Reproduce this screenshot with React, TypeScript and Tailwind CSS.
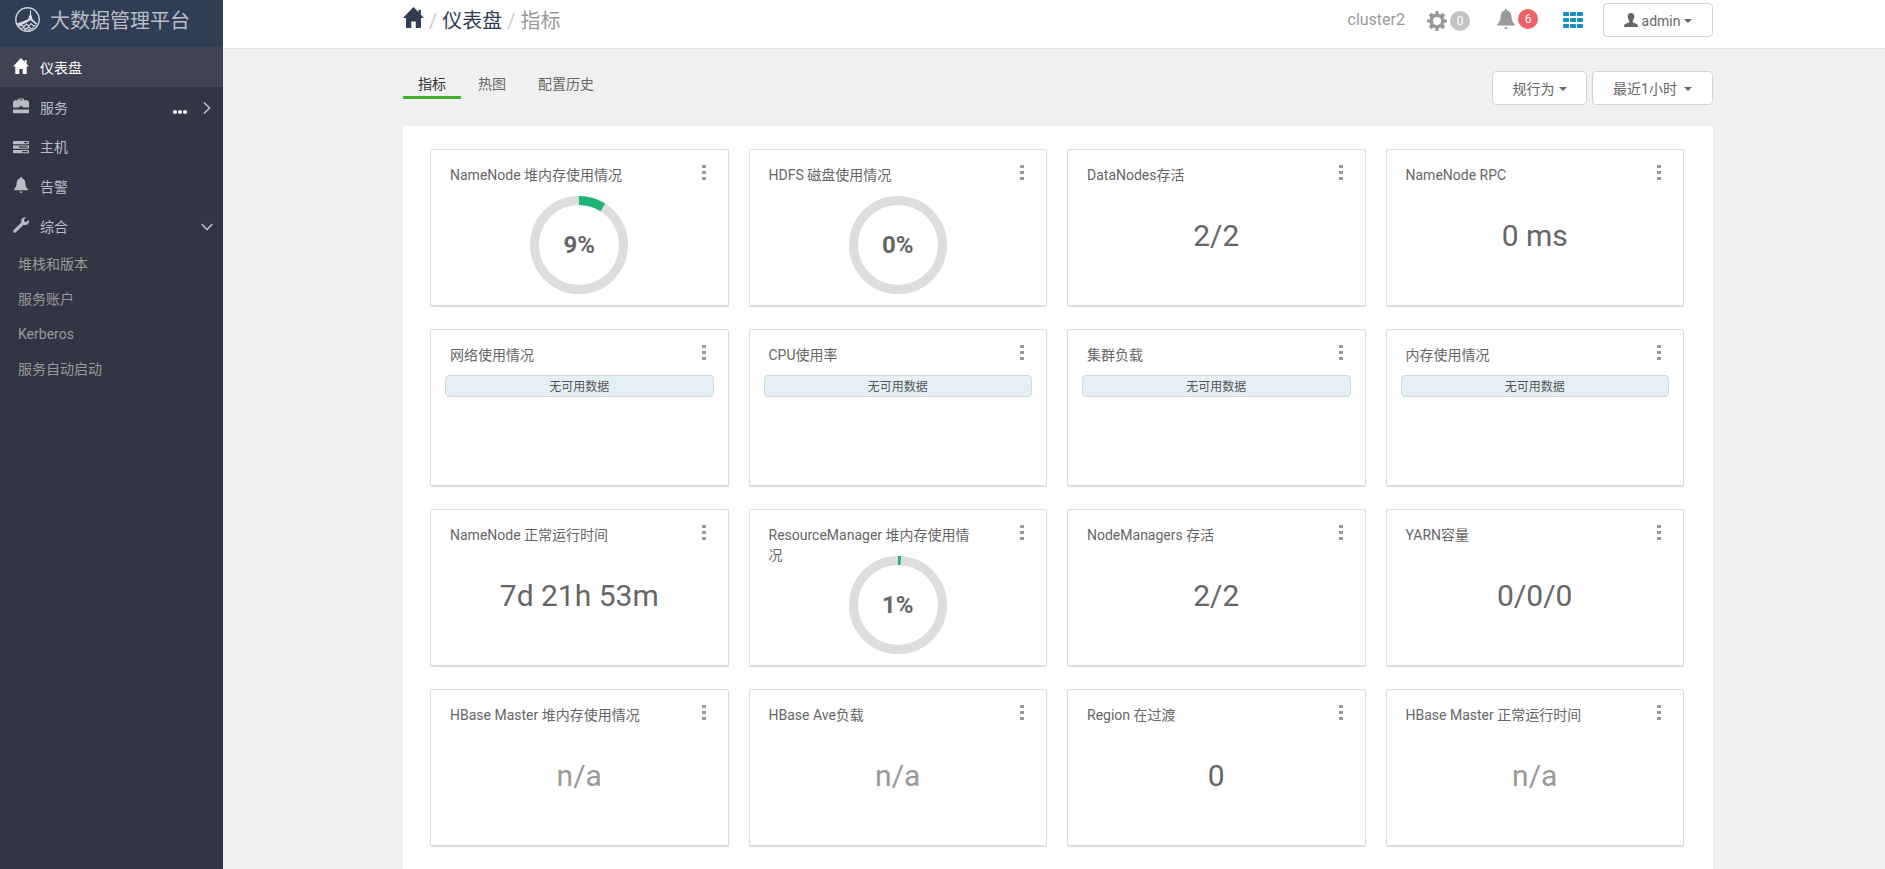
import React from 'react';

type IconProps = { className?: string };

interface Widget {
  title: string;
  kind: 'donut' | 'text' | 'empty';
  value?: string;
  percent?: number;
  muted?: boolean;
}

const WIDGETS: Widget[] = [
  { title: 'NameNode 堆内存使用情况', kind: 'donut', percent: 9 },
  { title: 'HDFS 磁盘使用情况', kind: 'donut', percent: 0 },
  { title: 'DataNodes存活', kind: 'text', value: '2/2' },
  { title: 'NameNode RPC', kind: 'text', value: '0 ms' },
  { title: '网络使用情况', kind: 'empty' },
  { title: 'CPU使用率', kind: 'empty' },
  { title: '集群负载', kind: 'empty' },
  { title: '内存使用情况', kind: 'empty' },
  { title: 'NameNode 正常运行时间', kind: 'text', value: '7d 21h 53m' },
  { title: 'ResourceManager 堆内存使用情况', kind: 'donut', percent: 1 },
  { title: 'NodeManagers 存活', kind: 'text', value: '2/2' },
  { title: 'YARN容量', kind: 'text', value: '0/0/0' },
  { title: 'HBase Master 堆内存使用情况', kind: 'text', value: 'n/a', muted: true },
  { title: 'HBase Ave负载', kind: 'text', value: 'n/a', muted: true },
  { title: 'Region 在过渡', kind: 'text', value: '0' },
  { title: 'HBase Master 正常运行时间', kind: 'text', value: 'n/a', muted: true },
];

const HomeIcon: React.FC<IconProps> = ({ className }) => (
  <svg className={className} viewBox="0 0 16 16" fill="currentColor" aria-hidden="true">
    <path d="M8 0 0 8.400h2.300v7.200q0 .4.4.4h3.200q.4 0 .4-.4V11h3.400v4.600q0 .4.4.4h3.200q.4 0 .4-.4V8.400H16l-2.400-2.500V2h-1.800v2z" />
  </svg>
);

const BriefcaseIcon: React.FC<IconProps> = ({ className }) => (
  <svg className={className} viewBox="0 0 16 16" fill="currentColor" aria-hidden="true">
    <path d="M5 2.200V1.400Q5 .4 6 .4h4q1 0 1 1v.8h3.600L16 4v5.600H9.400V8H6.600v1.600H0V4l1.400-1.800zm1.300 0h3.400v-.7H6.300zM0 11.400h16v3q0 .9-.9.900H.9q-.9 0-.9-.9z" />
  </svg>
);

const TasksIcon: React.FC<IconProps> = ({ className }) => (
  <svg className={className} viewBox="0 0 16 16" fill="currentColor" aria-hidden="true">
    <path fillRule="evenodd" d="M.6 2h14.800l.6.6v2.100l-.6.6H.6L0 4.700V2.600zM11 3.100v1.100h3.700V3.100zM.6 6.500h14.800l.6.600v2.100l-.6.600H.6L0 9.200V7.100zM6 7.600v1.100h8.700V7.600zM.6 11h14.800l.6.600v2.100l-.6.600H.6l-.6-.6v-2.100zM9 12.100v1.100h5.700v-1.100z" />
  </svg>
);

const BellIcon: React.FC<IconProps> = ({ className }) => (
  <svg className={className} viewBox="0 0 16 16" fill="currentColor" aria-hidden="true">
    <path d="M8 0c.6 0 1 .5 1.100 1.200 2.100.6 3 2.200 3.200 4.600.2 3.200.9 5 2.700 6.400v1H1v-1c1.800-1.400 2.500-3.200 2.700-6.400.2-2.400 1.100-4 3.200-4.600C7 .5 7.400 0 8 0zM6.600 14.500h2.800Q9.200 16 8 16t-1.400-1.500z" />
  </svg>
);

const WrenchIcon: React.FC<IconProps> = ({ className }) => (
  <svg className={className} viewBox="0 0 16 16" fill="currentColor" aria-hidden="true">
    <path d="M13.200.3 10.900 2.600l.5 2 2 .5 2.400-2.300c.6 2.300-.2 4.300-2.200 5-1.100.4-2.100.3-3-.1l-7.700 7.600q-1.100 1-2.200 0t0-2.300l7.700-7.500C7.500 2.500 9.500-.3 13.200.3z" />
  </svg>
);

const CogIcon: React.FC<IconProps> = ({ className }) => (
  <svg className={className} viewBox="0 0 20 20" fill="currentColor" aria-hidden="true">
    <path
      fillRule="evenodd"
      d="M8.700 0h2.600l.5 2.700 1.700.7L15.800 1.800l2.400 2.400-1.600 2.300.7 1.700 2.700.5v2.600l-2.700.5-.7 1.700 1.600 2.300-2.400 2.400-2.300-1.600-1.700.7-.5 2.700H8.700l-.5-2.700-1.700-.7-2.300 1.600-2.400-2.400 1.600-2.300-.7-1.700L0 11.300V8.700l2.700-.5.7-1.700L1.800 4.200l2.400-2.400 2.300 1.600 1.700-.7zM10 6a4 4 0 1 0 0 8 4 4 0 0 0 0-8z"
    />
  </svg>
);

const GridIcon: React.FC<IconProps> = ({ className }) => (
  <svg className={className} viewBox="0 0 20 16" fill="currentColor" aria-hidden="true">
    {[0, 6, 12].map(y =>
      [0, 7, 14].map(x => <rect key={`${x}-${y}`} x={x} y={y} width="6" height="4" rx="1" />)
    )}
  </svg>
);

const UserIcon: React.FC<IconProps> = ({ className }) => (
  <svg className={className} viewBox="0 0 14 14" fill="currentColor" aria-hidden="true">
    <path d="M7 0c2.200 0 3.400 1.500 3.300 3.800-.1 1.800-.7 3.200-1.600 4v1.100c.3.900 3.800 1.400 4.700 2.600.4.600.6 1.400.6 2.500H0c0-1.100.2-1.900.6-2.500.9-1.200 4.400-1.700 4.700-2.600V7.800c-.9-.8-1.500-2.200-1.600-4C3.600 1.500 4.800 0 7 0z" />
  </svg>
);

const Chevron: React.FC<IconProps> = ({ className }) => (
  <svg className={className} viewBox="0 0 8 12" fill="none" stroke="currentColor" strokeWidth="1.600" aria-hidden="true">
    <path d="m1 .7 5.600 5.300L1 11.300" />
  </svg>
);

const Caret = () => (
  <span className="inline-block border-x-4 border-t-4 border-x-transparent border-t-current" />
);

const Logo = () => (
  <svg className="h-[25px] w-[25px] text-[#d3d9e0]" viewBox="0 0 25 25" fill="none" stroke="currentColor" aria-hidden="true">
    <circle cx="12.500" cy="12.500" r="11.700" strokeWidth="1.400" />
    <path d="M15.500 3.500V9" strokeWidth="1.200" />
    <path d="M14 8.500h3v2.300l.8 1.700 4.700 4.300-1.500.7-5.500-4.300-6.500 3.800L2.500 19l-1-2.500 7-2.200 4.800-2.300z" fill="currentColor" stroke="none" />
    <path d="m3.500 19.500 3-1.300 2.500 1.300 2.500-2.500 2.500 2 2-2.500 2.500 2.500 3-1M5.500 21.500l3-1 2.500 1.500 2.500-2.500 2.500 2.500 3-1.500M9 23l3-1.500 3 1.500" strokeWidth="1.100" />
  </svg>
);

const Donut: React.FC<{ percent: number }> = ({ percent }) => (
  <div className="relative h-[98px] w-[98px]">
    <svg className="h-full w-full -rotate-90" viewBox="0 0 98 98" fill="none" strokeWidth="9" aria-hidden="true">
      <circle cx="49" cy="49" r="44.500" stroke="#dddddd" />
      {percent > 0 && (
        <circle cx="49" cy="49" r="44.500" stroke="#1eb475" pathLength="100" strokeDasharray={`${percent} 100`} />
      )}
    </svg>
    <span className="absolute inset-0 flex items-center justify-center text-2xl font-bold">{percent}%</span>
  </div>
);

const WidgetCard: React.FC<{ widget: Widget }> = ({ widget }) => (
  <section className="flex h-[157px] flex-col rounded-xs border border-[#dddddd] bg-white shadow-[0_1px_1px_rgba(0,0,0,0.15)]">
    <header className="flex h-[45px] shrink-0 items-start justify-between pt-[15px] pr-[18px] pl-[19px]">
      <h2 className="max-w-[210px] text-sm leading-5">{widget.title}</h2>
      <button type="button" aria-label="更多" className="flex w-3 flex-col items-center gap-[3px] text-[#999999]">
        <span className="h-[3px] w-1 bg-current" />
        <span className="h-[3px] w-1 bg-current" />
        <span className="h-[3px] w-1 bg-current" />
      </button>
    </header>
    {widget.kind === 'donut' && (
      <div className="flex justify-center pt-px">
        <Donut percent={widget.percent ?? 0} />
      </div>
    )}
    {widget.kind === 'text' && (
      <p className={`pt-[21px] text-center text-[30px] leading-10 ${widget.muted ? 'text-[#999999]' : ''}`}>{widget.value}</p>
    )}
    {widget.kind === 'empty' && (
      <p className="mx-3.5 h-[22px] rounded border border-[#cfd9dc] bg-[#e4f0f5] text-center text-xs leading-[22px] text-[#555555]">
        无可用数据
      </p>
    )}
  </section>
);

const Sidebar = () => {
  const item = 'flex h-10 items-center pt-0.5 pr-3 pl-[13px] text-sm';
  const icon = 'mr-[11px] mb-1 h-4 w-4';
  return (
    <aside className="w-[223px] shrink-0 bg-[#323544] text-[#b8bec4]">
      <div className="flex h-[47px] items-center gap-2.5 bg-[#313d54] pb-2 pl-[15px] text-xl">
        <Logo />
        <span className="pt-0.5">大数据管理平台</span>
      </div>
      <nav>
        <a href="#dashboard" className={`${item} bg-[#404351] text-white`}>
          <HomeIcon className={icon} />
          仪表盘
        </a>
        <a href="#services" className={item}>
          <BriefcaseIcon className={icon} />
          服务
          <span className="mt-2 mr-4 ml-auto flex gap-px">
            <span className="h-1 w-1 rounded-full bg-white" />
            <span className="h-1 w-1 rounded-full bg-white" />
            <span className="h-1 w-1 rounded-full bg-white" />
          </span>
          <Chevron className="h-3 w-2" />
        </a>
        <a href="#hosts" className="flex h-[39px] items-center pr-3 pl-[13px] text-sm">
          <TasksIcon className="mr-[11px] h-4 w-4" />
          主机
        </a>
        <a href="#alerts" className={item}>
          <BellIcon className={icon} />
          告警
        </a>
        <a href="#admin" className={item}>
          <WrenchIcon className={icon} />
          综合
          <Chevron className="ml-auto h-3 w-2 rotate-90" />
        </a>
        <ul className="text-sm text-[#999999]">
          {['堆栈和版本', '服务账户', 'Kerberos', '服务自动启动'].map(label => (
            <li key={label}>
              <a href="#admin" className="flex h-[35px] items-center pl-[18px]">{label}</a>
            </li>
          ))}
        </ul>
      </nav>
    </aside>
  );
};

const TopBar = () => (
  <div className="h-[49px] border-b border-[#e3e3e3] bg-white pl-2">
    <div className="mx-auto flex max-w-[1310px] items-start justify-between">
      <nav aria-label="breadcrumb" className="flex h-10 items-center pt-px text-xl text-[#313d54]">
        <a href="#home" aria-label="主页" className="mb-1.5">
          <HomeIcon className="h-[21px] w-[21px]" />
        </a>
        <span className="px-[5px] text-[#cccccc]">/</span>
        <a href="#dashboard">仪表盘</a>
        <span className="px-[5px] text-[#cccccc]">/</span>
        <span className="text-[#999999]">指标</span>
      </nav>
      <div className="flex h-10 items-center text-[#999999]">
        <span className="mr-[22px] text-base">cluster2</span>
        <button type="button" aria-label="后台操作" className="mr-[26px] flex items-center gap-[3px] pt-0.5">
          <CogIcon className="h-5 w-5" />
          <span className="h-5 w-5 rounded-full bg-[#c3c3c3] text-center text-xs leading-5 text-white">0</span>
        </button>
        <button type="button" aria-label="告警" className="mr-[25px] flex items-center gap-[2px] pb-0.5">
          <BellIcon className="h-5 w-5" />
          <span className="h-5 w-5 rounded-full bg-[#ef6162] text-center text-xs leading-5 text-white">6</span>
        </button>
        <button type="button" aria-label="视图" className="mr-5 text-[#1491c1]">
          <GridIcon className="h-4 w-5" />
        </button>
        <button
          type="button"
          className="flex h-[34px] w-[110px] items-center justify-center gap-1 rounded border border-[#cfd3d7] bg-white pt-0.5 text-sm text-[#666666]"
        >
          <UserIcon className="mb-0.5 h-3.5 w-3.5" />
          admin
          <Caret />
        </button>
      </div>
    </div>
  </div>
);

const App: React.FC = () => {
  const tab = 'h-[29px] border-b-3 px-[15px] leading-7';
  const dropdown = 'flex h-[34px] items-center justify-center rounded border border-[#cfd3d7] bg-white pt-0.5';

  return (
    <div className="flex min-h-screen bg-[#f0f0f0] font-['Roboto','Noto_Sans_CJK_SC',sans-serif] text-[#666666]">
      <Sidebar />
      <div className="flex min-w-0 grow flex-col">
        <TopBar />
        <main className="flex grow flex-col pl-2">
          <div className="mx-auto flex w-full max-w-[1310px] grow flex-col">
            <div className="flex h-[77px] items-start justify-between pt-[21px] text-sm">
              <div role="tablist" className="flex gap-0.5">
                <button type="button" role="tab" aria-selected="true" className={`${tab} border-[#3fae2a] text-[#333333]`}>指标</button>
                <button type="button" role="tab" aria-selected="false" className={`${tab} border-transparent`}>热图</button>
                <button type="button" role="tab" aria-selected="false" className={`${tab} border-transparent`}>配置历史</button>
              </div>
              <div className="flex gap-[5px] pt-px">
                <button type="button" className={`${dropdown} w-[95px] gap-1`}>
                  规行为
                  <Caret />
                </button>
                <button type="button" className={`${dropdown} w-[121px] gap-[7px]`}>
                  最近1小时
                  <Caret />
                </button>
              </div>
            </div>
            <div className="grid grow grid-cols-4 content-start gap-x-5 gap-y-[23px] bg-white pt-[23px] pr-[29px] pb-[23px] pl-[27px]">
              {WIDGETS.map(widget => (
                <WidgetCard key={widget.title} widget={widget} />
              ))}
            </div>
          </div>
        </main>
      </div>
    </div>
  );
};

export default App;
